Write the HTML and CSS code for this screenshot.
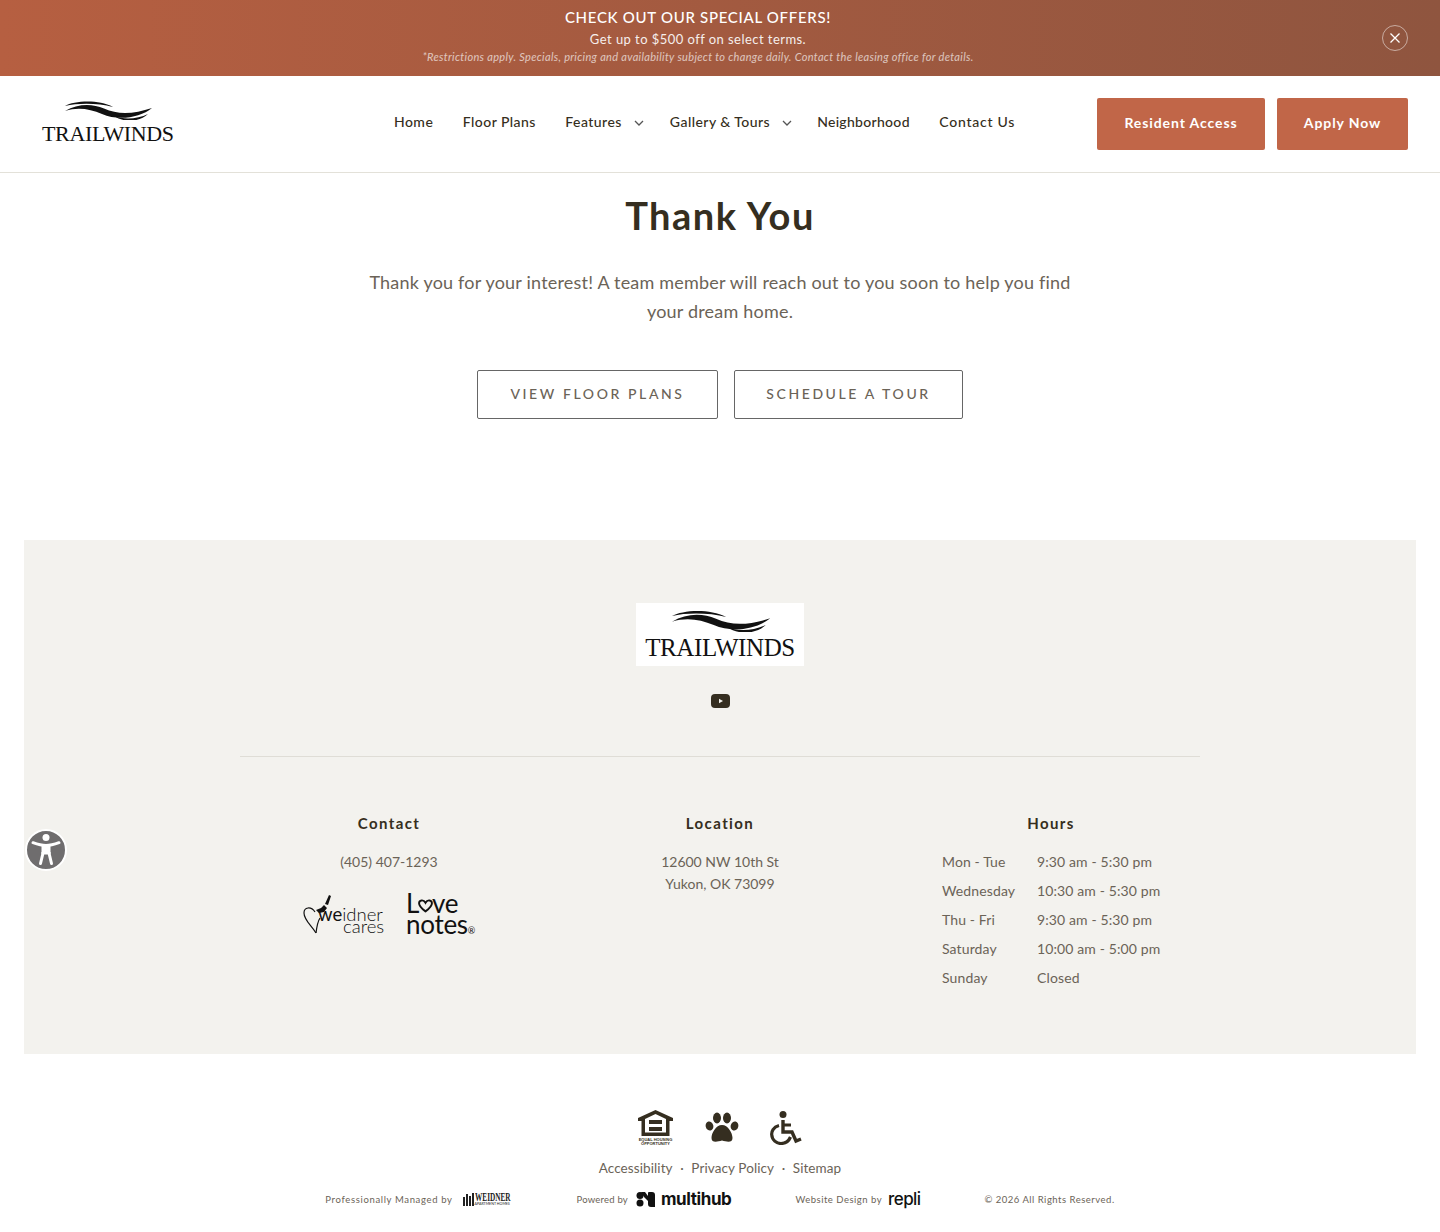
FILE: index.html
```html
<!DOCTYPE html>
<html lang="en">
<head>
  <meta charset="UTF-8">
  <title>Trailwinds | Thank You</title>
  <link rel="stylesheet" href="styles.css">
</head>
<body>
  <!-- banner -->
  <div class="promo">
    <div class="promo-text">
      <strong>CHECK OUT OUR SPECIAL OFFERS!</strong>
      <span class="promo-sub">Get up to $500 off on select terms.</span>
      <em>*Restrictions apply. Specials, pricing and availability subject to change daily. Contact the leasing office for details.</em>
    </div>
    <button class="promo-close" aria-label="Close">
      <svg width="12" height="12" viewBox="0 0 12 12"><path d="M1.5 1.5l9 9M10.5 1.5l-9 9" stroke="#fff" stroke-width="1.3" fill="none"/></svg>
    </button>
  </div>

  <!-- header -->
  <header class="site-header">
    <a class="logo" href="#">
      <svg class="logo-waves" width="131" height="20" viewBox="0 0 131 20">
        <path d="M23 6C32 1 56 -1 71 7C56 3 36 3 23 6Z" fill="#111"/>
        <path d="M23 11C36 3.500 50 3.500 62 8.500C76 15 92 14 110 8C98 18 76 21 60 14C48 9 36 7 23 11Z" fill="#111"/>
        <path d="M72 16C82 20 96 19 106 14C98 22 82 23 72 16Z" fill="#111"/>
      </svg>
      <span class="logo-name">TRAILWINDS</span>
    </a>
    <nav class="main-nav">
      <a href="#">Home</a>
      <a href="#">Floor Plans</a>
      <a href="#" class="has-sub">Features<svg width="10" height="6" viewBox="0 0 10 6"><path d="M1 1l4 4 4-4" stroke="#555" stroke-width="1.3" fill="none"/></svg></a>
      <a href="#" class="has-sub">Gallery &amp; Tours<svg width="10" height="6" viewBox="0 0 10 6"><path d="M1 1l4 4 4-4" stroke="#555" stroke-width="1.3" fill="none"/></svg></a>
      <a href="#" class="nav-hood">Neighborhood</a>
      <a href="#" class="nav-contact">Contact Us</a>
    </nav>
    <div class="header-btns">
      <a href="#" class="btn-solid btn-resident">Resident Access</a>
      <a href="#" class="btn-solid btn-apply">Apply Now</a>
    </div>
  </header>

  <!-- thank you -->
  <main class="thanks">
    <h1>Thank You</h1>
    <p>Thank you for your interest! A team member will reach out to you soon to help you find your dream home.</p>
    <div class="thanks-btns">
      <a href="#" class="btn-line btn-plans">VIEW FLOOR PLANS</a>
      <a href="#" class="btn-line btn-tour">SCHEDULE A TOUR</a>
    </div>
  </main>

  <!-- footer panel -->
  <section class="panel">
    <div class="panel-logo">
      <svg width="148" height="23" viewBox="0 0 131 20">
        <path d="M23 6C32 1 56 -1 71 7C56 3 36 3 23 6Z" fill="#111"/>
        <path d="M23 11C36 3.500 50 3.500 62 8.500C76 15 92 14 110 8C98 18 76 21 60 14C48 9 36 7 23 11Z" fill="#111"/>
        <path d="M72 16C82 20 96 19 106 14C98 22 82 23 72 16Z" fill="#111"/>
      </svg>
      <span>TRAILWINDS</span>
    </div>
    <a href="#" class="yt">
      <svg width="19" height="14" viewBox="0 0 19 14"><rect width="19" height="14" rx="4" fill="#352e20"/><path d="M8 4.800l4 2.200-4 2.200z" fill="#f3f2ee"/></svg>
    </a>
    <div class="panel-cols">
      <div class="col">
        <h3>Contact</h3>
        <p>(405) 407-1293</p>
        <div class="partners">
          <div class="cares">
            <svg width="34" height="42" viewBox="0 0 34 42">
              <path d="M13 40C8 32 1 27 1 20C1 14 8 13 12 19" fill="none" stroke="#111" stroke-width="1.2"/>
              <path d="M13 40C14 32 15 28 17 25" fill="none" stroke="#111" stroke-width="1.2"/>
              <path d="M13 17l5-2 3-3 3 3-3 4-5 1zM22 11l4-9 2 1-3 9z" fill="#111"/>
            </svg>
            <span class="cares-a"><b>we</b>idner</span>
            <span class="cares-b">cares</span>
          </div>
          <div class="love">
            <span>L<svg width="15" height="14" viewBox="0 0 14 13"><path d="M7 11.500C2 8 1 6 1 4C1 1 5 0 7 3.500C9 0 13 1 13 4C13 6 12 8 7 11.500Z" fill="none" stroke="#111" stroke-width="1.8"/></svg>ve</span>
            <span>notes<i>®</i></span>
          </div>
        </div>
      </div>
      <div class="col">
        <h3>Location</h3>
        <p>12600 NW 10th St<br>Yukon, OK 73099</p>
      </div>
      <div class="col">
        <h3>Hours</h3>
        <table class="hours">
          <tr><td>Mon - Tue</td><td>9:30 am - 5:30 pm</td></tr>
          <tr><td>Wednesday</td><td>10:30 am - 5:30 pm</td></tr>
          <tr><td>Thu - Fri</td><td>9:30 am - 5:30 pm</td></tr>
          <tr><td>Saturday</td><td>10:00 am - 5:00 pm</td></tr>
          <tr><td>Sunday</td><td>Closed</td></tr>
        </table>
      </div>
    </div>
  </section>

  <!-- bottom -->
  <footer class="bottom">
    <div class="legal-icons">
      <svg width="37" height="35" viewBox="0 0 37 35">
        <path fill-rule="evenodd" d="M18.500 0L1 8v3h3.500v15h28V11H36V8zM18.500 4L29 9v13.500H8V9z" fill="#352e20"/>
        <path d="M12 10h13v4H12zM12 17h13v4H12z" fill="#352e20"/>
        <text class="eho" x="18.500" y="30.500" text-anchor="middle">EQUAL HOUSING</text>
        <text class="eho" x="18.500" y="34.500" text-anchor="middle">OPPORTUNITY</text>
      </svg>
      <svg width="34" height="31" viewBox="0 0 34 31">
        <ellipse cx="4.500" cy="14" rx="3.800" ry="4.600" transform="rotate(-15 4.500 14)" fill="#352e20"/>
        <ellipse cx="12" cy="6" rx="4" ry="5.400" fill="#352e20"/>
        <ellipse cx="22" cy="6" rx="4" ry="5.400" fill="#352e20"/>
        <ellipse cx="29.500" cy="14" rx="3.800" ry="4.600" transform="rotate(15 29.500 14)" fill="#352e20"/>
        <path d="M17 13C11 13 6.500 21 6.500 26C6.500 31 12 30 17 28.500C22 30 27.500 31 27.500 26C27.500 21 23 13 17 13Z" fill="#352e20"/>
      </svg>
      <svg width="33" height="34" viewBox="0 0 33 34">
        <circle cx="13" cy="3.500" r="3.500" fill="#352e20"/>
        <path d="M13 9v12h9l4 9 5-2" fill="none" stroke="#352e20" stroke-width="3.400"/>
        <path d="M13 14h8" stroke="#352e20" stroke-width="3"/>
        <path d="M9 14.500C3 16 1.500 21 1.700 23.500C2 29 6.500 32.500 11 32.500C16 32.500 19 29.500 20.500 26" fill="none" stroke="#352e20" stroke-width="3.200"/>
      </svg>
    </div>
    <div class="legal-links">
      <a href="#">Accessibility</a><span>·</span><a href="#">Privacy Policy</a><span>·</span><a href="#">Sitemap</a>
    </div>
    <div class="credits">
      <div class="credit credit-managed">Professionally Managed by
        <span class="weidner">
          <svg width="11" height="13" viewBox="0 0 11 13"><path d="M0 4h2v9H0zM3 1h2v12H3zM6 3h2v10H6zM9 0h2v13H9z" fill="#222"/></svg>
          <span class="weidner-txt"><b>WEIDNER</b><small>APARTMENT HOMES</small></span>
        </span>
      </div>
      <div class="credit credit-power">Powered by
        <span class="multihub">
          <svg width="19" height="15" viewBox="0 0 19 15"><circle cx="4" cy="3.500" r="3.500" fill="#111"/><circle cx="4" cy="11" r="3.500" fill="#111"/><path d="M5 0h4l3 4V1a1 1 0 0 1 1-1h3a3 3 0 0 1 3 3v12h-4a3 3 0 0 1-3-3V9L8 5z" fill="#111"/></svg>
          multihub
        </span>
      </div>
      <div class="credit credit-design">Website Design by <span class="repli">repli</span></div>
      <div class="credit credit-copy">© 2026 All Rights Reserved.</div>
    </div>
  </footer>

  <button class="a11y" aria-label="Accessibility">
    <svg width="34" height="34" viewBox="0 0 34 34">
      <circle cx="17" cy="4.500" r="3.500" fill="#fff"/>
      <path d="M4 9.700C9 11.500 13 12.500 17 12.500C21 12.500 25 11.500 30 9.700" stroke="#fff" stroke-width="3" stroke-linecap="round" fill="none"/>
      <path d="M14 13v7L11.500 30.500M20 13v7L22.500 30.500M13.500 20h7" stroke="#fff" stroke-width="3" stroke-linecap="round" fill="none"/>
      <path d="M13.500 12h7v8h-7z" fill="#fff"/>
    </svg>
  </button>
</body>
</html>
```

FILE: styles.css
```css
* {
  box-sizing: border-box;
  margin: 0;
  padding: 0;
}
body {
  background: #fff;
  color: #6b6357;
  font-family: 'Lato', 'Liberation Sans', sans-serif;
}
a {
  color: inherit;
  text-decoration: none;
}
/* banner */
.promo {
  display: flex;
  align-items: center;
  height: 76px;
  padding: 0 32px 0 0;
  background: linear-gradient(90deg, #b65f41 0%, #8f553f 100%);
  color: #fff;
}
.promo-text {
  flex: 1;
  display: flex;
  flex-direction: column;
  align-items: center;
  padding: 0 0 5px 14px;
}
.promo-text strong {
  font-size: 15px;
  line-height: 20px;
  font-weight: 500;
  letter-spacing: 0.7px;
}
.promo-sub {
  font-size: 13px;
  line-height: 18px;
  margin-top: 3px;
  letter-spacing: 0.45px;
  opacity: 0.9;
}
.promo-text em {
  font-size: 11px;
  line-height: 14px;
  margin-top: 2px;
  letter-spacing: 0.33px;
  opacity: 0.65;
}
.promo-close {
  display: flex;
  align-items: center;
  justify-content: center;
  width: 26px;
  height: 26px;
  border: 1px solid rgba(255, 255, 255, 0.5);
  border-radius: 50%;
  background: transparent;
}
/* header */
.site-header {
  display: flex;
  align-items: center;
  height: 97px;
  padding: 0 32px 1px 42px;
  border-bottom: 1px solid #e3e1d9;
}
.logo {
  display: flex;
  flex-direction: column;
  width: 131px;
  margin-top: -4px;
}
.logo-waves {
  margin-bottom: 4px;
}
.logo-name {
  font-family: 'Liberation Serif', serif;
  font-size: 22px;
  line-height: 20px;
  letter-spacing: -0.35px;
  color: #111;
}
.main-nav {
  display: flex;
  align-items: center;
  margin-left: 221px;
  margin-top: -4px;
  color: #352e20;
  font-size: 14px;
  font-weight: 500;
  letter-spacing: 0.45px;
}
.main-nav a {
  display: flex;
  align-items: center;
  margin-right: 29.5px;
}
.main-nav a.has-sub {
  margin-right: 26px;
}
.main-nav a.has-sub + .has-sub {
  margin-right: 25px;
}
.main-nav a.has-sub svg {
  margin-left: 12px;
  margin-top: 3px;
}
.main-nav a.nav-hood {
  letter-spacing: 0.3px;
}
.main-nav a.nav-contact {
  letter-spacing: 0.75px;
}
.header-btns {
  display: flex;
  gap: 12px;
  margin-left: auto;
}
.btn-solid {
  display: flex;
  align-items: center;
  justify-content: center;
  height: 52px;
  padding-bottom: 2px;
  border-radius: 2px;
  background: #c16648;
  color: #fff;
  font-size: 14px;
  font-weight: 700;
  letter-spacing: 0.9px;
}
.btn-resident {
  width: 168px;
}
.btn-apply {
  width: 131px;
}
/* thank you */
.thanks {
  display: flex;
  flex-direction: column;
  align-items: center;
  height: 367px;
  padding-top: 19px;
}
.thanks h1 {
  font-size: 38px;
  line-height: 46px;
  font-weight: 700;
  letter-spacing: 1.5px;
  color: #352e20;
}
.thanks p {
  width: 720px;
  margin-top: 30px;
  text-align: center;
  font-size: 18px;
  line-height: 29px;
  letter-spacing: 0.2px;
}
.thanks-btns {
  display: flex;
  gap: 16px;
  margin-top: 44px;
}
.btn-line {
  display: flex;
  align-items: center;
  justify-content: center;
  height: 49px;
  padding-bottom: 3px;
  border: 1px solid #666;
  border-radius: 2px;
  font-size: 14px;
  font-weight: 500;
  letter-spacing: 2.6px;
}
.btn-plans {
  width: 241px;
}
.btn-tour {
  width: 229px;
}
/* footer panel */
.panel {
  display: flex;
  flex-direction: column;
  align-items: center;
  height: 514px;
  margin: 0 24px;
  padding-top: 63px;
  background: #f3f2ee;
}
.panel-logo {
  display: flex;
  flex-direction: column;
  align-items: center;
  width: 168px;
  height: 63px;
  padding-top: 6px;
  background: #fff;
}
.panel-logo span {
  margin-top: 4px;
  font-family: 'Liberation Serif', serif;
  font-size: 25px;
  line-height: 24px;
  letter-spacing: -0.4px;
  color: #111;
}
.yt {
  display: flex;
  margin-top: 28px;
}
.panel-cols {
  display: grid;
  grid-template-columns: repeat(3, 298px);
  gap: 33px;
  width: 960px;
  margin-top: 48px;
  padding-top: 55px;
  border-top: 1px solid #dfddd6;
}
.col {
  display: flex;
  flex-direction: column;
  align-items: center;
  text-align: center;
  font-size: 14px;
  line-height: 22px;
}
.col h3 {
  color: #352e20;
  font-size: 15px;
  font-weight: 700;
  letter-spacing: 1.4px;
  line-height: 22px;
  margin-bottom: 17px;
}
.partners {
  display: flex;
  align-items: flex-start;
  gap: 22px;
  margin-top: 20px;
  color: #111;
}
.cares {
  position: relative;
  width: 81px;
  height: 42px;
  text-align: left;
}
.cares svg {
  display: block;
}
.cares span {
  position: absolute;
  font-size: 18.5px;
  line-height: 12px;
  font-weight: 300;
}
.cares-a {
  left: 15px;
  top: 15px;
}
.cares-b {
  left: 40px;
  top: 27px;
}
.love {
  display: flex;
  flex-direction: column;
  align-items: flex-start;
  font-size: 26px;
  line-height: 21px;
  letter-spacing: -0.3px;
}
.love svg {
  margin: 0 -1px;
}
.love i {
  font-style: normal;
  font-size: 9px;
}
.hours {
  border-collapse: collapse;
  align-self: flex-start;
  margin-left: 40px;
  margin-top: -4px;
  text-align: left;
  letter-spacing: 0.12px;
}
.hours td {
  height: 29px;
  white-space: nowrap;
}
.hours td:first-child {
  width: 95px;
}
/* bottom */
.bottom {
  display: flex;
  flex-direction: column;
  align-items: center;
  padding-top: 56px;
}
.legal-icons {
  display: flex;
  align-items: center;
  gap: 31px;
  height: 35px;
}
.eho {
  font-family: 'Liberation Sans', sans-serif;
  font-size: 4px;
  font-weight: 700;
  fill: #352e20;
}
.legal-links {
  display: flex;
  gap: 7.5px;
  margin-top: 13px;
  font-size: 13.5px;
  line-height: 20px;
  letter-spacing: 0.1px;
}
.credits {
  display: flex;
  align-items: center;
  margin-top: 11px;
  height: 20px;
  font-size: 9.5px;
  letter-spacing: 0.5px;
}
.credit {
  display: flex;
  align-items: center;
  white-space: nowrap;
}
.credit-managed {
  margin-right: 66px;
  letter-spacing: 0.65px;
}
.credit-power {
  margin-right: 64px;
  letter-spacing: 0.2px;
}
.credit-design {
  margin-right: 64px;
}
.weidner {
  display: flex;
  align-items: center;
  gap: 1px;
  margin-left: 10px;
}
.weidner-txt {
  display: flex;
  flex-direction: column;
  width: 36px;
  color: #222;
}
.weidner-txt b {
  display: block;
  font-family: 'Liberation Serif', serif;
  font-size: 13px;
  line-height: 10px;
  letter-spacing: 0;
  transform: scaleX(0.56);
  transform-origin: left;
}
.weidner-txt small {
  font-size: 3.6px;
  line-height: 4px;
  letter-spacing: 0;
}
.multihub {
  display: flex;
  align-items: center;
  gap: 6px;
  margin-left: 8px;
  color: #111;
  font-family: 'Inter', sans-serif;
  font-size: 17px;
  font-weight: 700;
  letter-spacing: -0.4px;
}
.repli {
  margin-left: 6px;
  color: #111;
  font-family: 'Inter', sans-serif;
  font-size: 17px;
  font-weight: 500;
  letter-spacing: -0.6px;
}
/* accessibility widget */
.a11y {
  position: fixed;
  left: 25px;
  top: 829px;
  display: flex;
  align-items: center;
  justify-content: center;
  width: 42px;
  height: 42px;
  border: 2px solid #fff;
  border-radius: 50%;
  background: #6f6d6e;
}
```
